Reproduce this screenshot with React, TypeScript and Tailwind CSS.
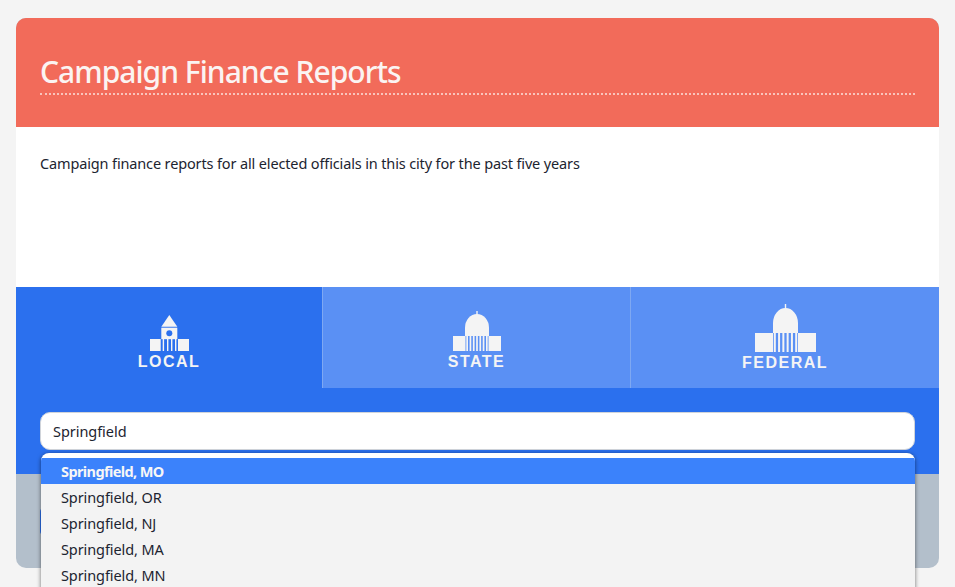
const font = { fontFamily: "'Noto Sans', sans-serif" };
const W = "#f4f4f4";

function Local() {
  return (
    <svg width="39" height="36" viewBox="0 0 39 36" className="block">
      <path d="M11.3 11.7 L19.3 0 L27.3 11.7 Z" fill={W} />
      <rect x="11.3" y="12.7" width="16" height="11.5" fill={W} />
      <circle cx="19.3" cy="18.3" r="3" fill="#2b70ee" />
      <rect x="0" y="24" width="10.7" height="12" fill={W} />
      <rect x="28" y="24" width="11" height="12" fill={W} />
      {[12.7, 17, 21, 25].map((x) => (
        <rect key={x} x={x} y="24" width="1.4" height="12" fill={W} />
      ))}
    </svg>
  );
}

function Capitol({ w, h, wing, col, domeW, domeTop, baseTop, n, ry }: { w: number; h: number; wing: number; col: number; domeW: number; domeTop: number; baseTop: number; n: number; ry: number }) {
  const cx = w / 2;
  const r = domeW / 2;
  const bars = Array.from({ length: n }, (_, i) => wing + 0.8 + (i * (w - 2 * wing - 1.6 - col)) / (n - 1));
  return (
    <svg width={w} height={h} viewBox={`0 0 ${w} ${h}`} className="block">
      <rect x={cx - 0.7} y="0" width="1.4" height={domeTop + 2} fill={W} />
      <path d={`M${cx - r} ${baseTop} V${domeTop + ry} A${r} ${ry} 0 0 1 ${cx + r} ${domeTop + ry} V${baseTop} Z`} fill={W} />
      <rect x="0" y={baseTop} width={wing} height={h - baseTop} fill={W} />
      <rect x={w - wing} y={baseTop} width={wing} height={h - baseTop} fill={W} />
      {bars.map((x) => (
        <rect key={x} x={x} y={baseTop} width={col} height={h - baseTop} fill={W} />
      ))}
    </svg>
  );
}

function Tab({ label, active, icon, border, width, pt }: { label: string; active?: boolean; icon: React.ReactNode; border?: boolean; width: string; pt: string }) {
  return (
    <div className={`flex flex-col items-center ${width} ${pt} ${active ? "bg-[#2b70ee]" : "bg-[#5a90f4]"} ${border ? "border-r border-[#7ea8f2]" : ""}`}>
      {icon}
      <span className="mt-[2px] text-[16px] leading-[18px] font-bold tracking-[1.5px] text-[#f4f4f4]" style={{ fontFamily: "'Liberation Sans', Arial, sans-serif" }}>
        {label}
      </span>
    </div>
  );
}

const items = ["Springfield, MO", "Springfield, OR", "Springfield, NJ", "Springfield, MA", "Springfield, MN"];

export default function App() {
  return (
    <div className="h-[587px] overflow-hidden bg-[#f4f4f4] px-4 pt-[18px]" style={font}>
      <div className="relative h-[550px] rounded-[10px] bg-[#b3bfcb]">
        <div className="h-[109px] rounded-t-[10px] bg-[#f26b5a] px-6 pt-[34px]">
          <h1 className="border-b-2 border-dotted border-[#f8c4bc] pb-[2px] text-[30px] leading-[39px] font-medium tracking-[-0.98px] text-[#fbf4f2]">Campaign Finance Reports</h1>
        </div>
        <div className="h-[160px] bg-white px-6 pt-[26px] text-[14.5px] leading-[20px] tracking-[-0.14px] text-[#1c2430]">
          Campaign finance reports for all elected officials in this city for the past five years
        </div>
        <div className="flex h-[101px]">
          <Tab label="LOCAL" active border width="w-[307px]" pt="pt-[28px]" icon={<Local />} />
          <Tab label="STATE" border width="w-[308px]" pt="pt-[24px]" icon={<Capitol w={48} h={40} wing={12.5} col={1.7} domeW={24} domeTop={3} baseTop={25} n={7} ry={14} />} />
          <Tab label="FEDERAL" width="w-[308px]" pt="pt-[17px]" icon={<Capitol w={61} h={48} wing={18} col={2} domeW={25} domeTop={4} baseTop={29} n={6} ry={15} />} />
        </div>
        <div className="h-[86px] bg-[#2b70ee] px-6 pt-6">
          <div className="flex h-[38px] items-center rounded-[10px] border border-[#d0d4da] bg-white px-3 pt-[1px] text-[14.5px] tracking-[-0.05px] text-[#1c2430]">Springfield</div>
        </div>
        <div className="px-6 pt-[34px]">
          <div className="h-[27px] w-[60px] rounded bg-[#2b70ee]" />
        </div>
        <div className="absolute top-[435px] right-6 left-[25px] h-[200px] overflow-hidden rounded-t-[8px] bg-white pt-[5px] shadow-[0_1px_4px_rgba(0,0,0,0.55)]">
          <div className="h-full bg-[#f3f3f3]">
            {items.map((item, i) => (
              <div key={item} className={`flex h-[26px] items-center pt-[1px] pl-5 text-[14.5px] ${i === 0 ? "bg-[#3b82fb] font-bold tracking-[-0.6px] text-[#f6f6f6]" : "tracking-[-0.1px] text-[#1c2430]"}`}>
                {item}
              </div>
            ))}
          </div>
        </div>
      </div>
    </div>
  );
}
